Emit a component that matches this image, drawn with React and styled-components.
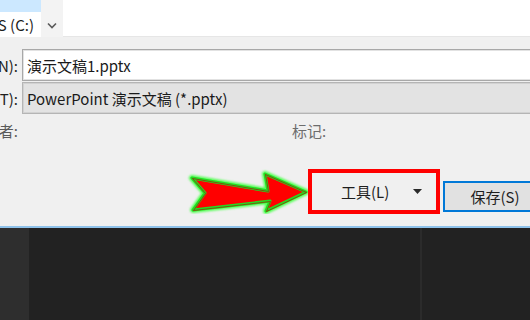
import React from "react";
import styled, { createGlobalStyle } from "styled-components";

const Global = createGlobalStyle`
  html, body { margin: 0; padding: 0; background: #222222; }
  body { font-family: "Noto Sans CJK SC", "Noto Sans", sans-serif; }
`;

const Screen = styled.div`
  width: 530px;
  height: 320px;
  overflow: hidden;
  display: flex;
  flex-direction: column;
  background: #f0f0f0;
`;

const TopPane = styled.div`
  height: 37px;
  flex-shrink: 0;
  display: flex;
`;

const NavPane = styled.div`
  width: 41px;
  background: #ffffff;
  display: flex;
  flex-direction: column;
  overflow: hidden;
`;

const NavSelected = styled.div`
  height: 12px;
  background: #cce8ff;
`;

const NavItem = styled.div`
  height: 25px;
  display: flex;
  align-items: center;
  justify-content: flex-end;
  padding-right: 7px;
  font-size: 15px;
  color: #1e1e1e;
  white-space: nowrap;
`;

const Expander = styled.div`
  width: 22px;
  background: #f3f3f3;
  display: flex;
  align-items: flex-end;
  justify-content: center;
  padding-bottom: 8px;
  box-sizing: border-box;
`;

const FileList = styled.div`
  flex: 1;
  background: #ffffff;
  border-bottom: 1px solid #e6e6e6;
`;

const Form = styled.div`
  flex-shrink: 0;
  display: flex;
  flex-direction: column;
  padding-top: 12px;
  padding-bottom: 12px;
`;

const FieldRow = styled.div`
  display: flex;
  align-items: center;
  height: ${(p) => p.$h || 32}px;
  margin-top: ${(p) => p.$mt || 0}px;
`;

const Label = styled.div`
  width: 21px;
  flex-shrink: 0;
  display: flex;
  justify-content: flex-end;
  padding-right: 3px;
  box-sizing: border-box;
  overflow: hidden;
  white-space: nowrap;
  font-size: 15px;
  color: ${(p) => p.$color || "#1e1e1e"};
`;

const Field = styled.div`
  flex: 1;
  height: 100%;
  margin-left: 1px;
  margin-right: -4px;
  box-sizing: border-box;
  border: 1px solid ${(p) => (p.$readonly ? "#b5b5b5" : "#a8a8a8")};
  box-shadow: inset 0 0 0 1px ${(p) => (p.$readonly ? "#d2d2d2" : "#e2e2e2")};
  background: ${(p) => (p.$readonly ? "#e3e3e3" : "#ffffff")};
  display: flex;
  align-items: center;
  padding-left: 4px;
  font-size: 15px;
  color: #1a1a1a;
  white-space: nowrap;
`;

const MetaLabel = styled.div`
  font-size: 15px;
  color: #6d6d6d;
  margin-left: ${(p) => p.$ml || 0}px;
  white-space: nowrap;
`;

const ButtonRow = styled.div`
  display: flex;
  align-items: center;
  height: 46px;
  margin-top: 28px;
  padding-left: 186px;
`;

const Highlight = styled.div`
  width: 132px;
  height: 45px;
  flex-shrink: 0;
  box-sizing: border-box;
  border: 4px solid #ff0000;
  display: flex;
  align-items: center;
  padding-left: 29px;
  gap: 24px;
  font-size: 15px;
  color: #1e1e1e;
`;

const SaveButton = styled.div`
  width: 104px;
  height: 31px;
  flex-shrink: 0;
  margin-left: 3px;
  margin-top: 10px;
  box-sizing: border-box;
  border: 2px solid #0078d7;
  background: #e1e1e1;
  display: flex;
  align-items: center;
  justify-content: center;
  font-size: 15px;
  color: #1e1e1e;
`;

const Taskbar = styled.div`
  flex: 1;
  display: flex;
  border-top: 2px solid #8fc2ea;
  box-shadow: inset 0 2px 0 #1c3954;
  background: #222222;
`;

const TaskStrip = styled.div`
  width: ${(p) => p.$w}px;
  flex-shrink: 0;
  background: ${(p) => p.$bg};
`;

const TaskFill = styled.div`
  flex: 1;
  background: #222222;
`;

function Chevron() {
  return (
    <svg width="10" height="7" viewBox="0 0 10 7">
      <path d="M1 1.5 L5 5.5 L9 1.5" fill="none" stroke="#5a5a5a" strokeWidth="1.6" />
    </svg>
  );
}

const ARROW = "6,10 82,23 79,6 120,24 80,43 84,33 7,42 19,25";

function Arrow() {
  return (
    <svg width="122" height="46" viewBox="0 0 122 46" style={{ flexShrink: 0 }}>
      <defs>
        <filter id="glow" x="-10%" y="-30%" width="120%" height="160%">
          <feGaussianBlur stdDeviation="1.2" />
        </filter>
      </defs>
      <polygon points={ARROW} fill="none" stroke="#55ff55" strokeWidth="6" strokeLinejoin="round" filter="url(#glow)" />
      <polygon points={ARROW} fill="#ff0000" stroke="#22dd22" strokeWidth="3" strokeLinejoin="round" />
      <polygon
        points={ARROW}
        fill="none"
        stroke="#b00000"
        strokeWidth="1"
        strokeLinejoin="round"
        opacity="0.6"
        transform="translate(0.5 0.5)"
      />
    </svg>
  );
}

function DropTriangle() {
  return (
    <svg width="9" height="5" viewBox="0 0 9 5">
      <polygon points="0,0 9,0 4.5,5" fill="#2a2a2a" />
    </svg>
  );
}

export default function App() {
  return (
    <>
      <Global />
      <Screen>
        <TopPane>
          <NavPane>
            <NavSelected />
            <NavItem>OS (C:)</NavItem>
          </NavPane>
          <Expander>
            <Chevron />
          </Expander>
          <FileList />
        </TopPane>
        <Form>
          <FieldRow>
            <Label>文件名(N):</Label>
            <Field>演示文稿1.pptx</Field>
          </FieldRow>
          <FieldRow $mt={1}>
            <Label>保存类型(T):</Label>
            <Field $readonly>PowerPoint 演示文稿 (*.pptx)</Field>
          </FieldRow>
          <FieldRow $h={20} $mt={6}>
            <Label $color="#5a5a5a">作者:</Label>
            <MetaLabel $ml={271}>标记:</MetaLabel>
          </FieldRow>
          <ButtonRow>
            <Arrow />
            <Highlight>
              <span>工具(L)</span>
              <DropTriangle />
            </Highlight>
            <SaveButton>保存(S)</SaveButton>
          </ButtonRow>
        </Form>
        <Taskbar>
          <TaskStrip $w={29} $bg="#2e2e2e" />
          <TaskStrip $w={391} $bg="#222222" />
          <TaskStrip $w={2} $bg="#2b2b2b" />
          <TaskFill />
        </Taskbar>
      </Screen>
    </>
  );
}
